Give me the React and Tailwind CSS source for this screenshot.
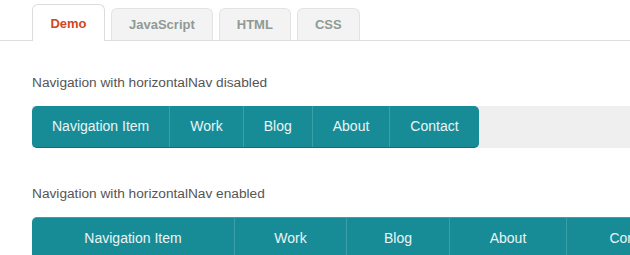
const tabs = [
  { label: "Demo", active: true },
  { label: "JavaScript" },
  { label: "HTML" },
  { label: "CSS" },
];

const items = ["Navigation Item", "Work", "Blog", "About", "Contact"];
const wideWidths = ["w-[202px]", "w-[112px]", "w-[103px]", "w-[117px]", "w-[134px]"];

export default function App() {
  return (
    <main className="h-[255px] w-[630px] overflow-hidden bg-white font-['Liberation_Sans',Arial,sans-serif]">
      <div className="flex h-[41px] items-end gap-[6px] border-b border-[#dedede] pl-8">
        {tabs.map((t) =>
          t.active ? (
            <div
              key={t.label}
              className="-mb-px flex h-[37px] w-[73px] items-center justify-center rounded-t-[6px] border border-b-0 border-[#dcdcdc] bg-white pt-[2px] text-[13px] font-bold text-[#d2461f]"
            >
              {t.label}
            </div>
          ) : (
            <div
              key={t.label}
              className="flex h-[32px] items-center justify-center rounded-t-[6px] border border-b-0 border-[#e3e3e3] bg-[#f3f3f3] px-[17px] pt-[1px] text-[13px] font-bold text-[#8f9a94]"
            >
              {t.label}
            </div>
          )
        )}
      </div>

      <p className="mt-[34px] pl-8 text-[13.7px] leading-4 text-[#555]">
        Navigation with horizontalNav disabled
      </p>
      <div className="ml-8 mt-[15px] flex h-[42px] bg-[#efefef]">
        <ul className="flex h-full overflow-hidden rounded-[5px] border-b border-[#0f6f78] bg-[#188c96]">
          {items.map((it, i) => (
            <li
              key={it}
              className={
                "flex items-center px-5 text-[14px] text-[#e8f5f6] " +
                (i > 0 ? "border-l border-[#3b9fa8]" : "")
              }
            >
              {it}
            </li>
          ))}
        </ul>
      </div>

      <p className="mt-[38px] pl-8 text-[13.7px] leading-4 text-[#555]">
        Navigation with horizontalNav enabled
      </p>
      <div className="ml-8 mt-[15px]">
        <ul className="flex h-[42px] w-[670px] overflow-hidden rounded-t-[5px] border-t border-[#3aa2ab] bg-[#188c96]">
          {items.map((it, i) => (
            <li
              key={it}
              className={
                "flex shrink-0 items-center justify-center text-[14px] text-[#e8f5f6] " +
                wideWidths[i] +
                (i > 0 ? " border-l border-[#3b9fa8]" : "")
              }
            >
              {it}
            </li>
          ))}
        </ul>
      </div>
    </main>
  );
}
